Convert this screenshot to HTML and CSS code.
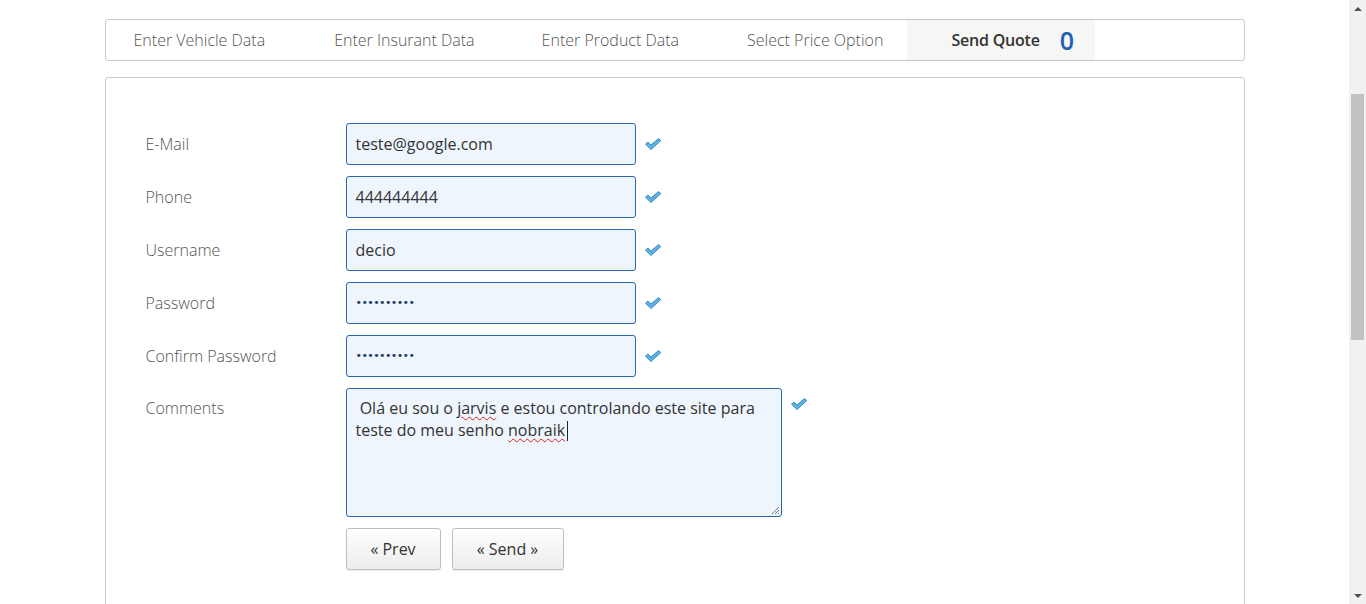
FILE: index.html
```html
<!DOCTYPE html>
<html>
<head>
<meta charset="utf-8">
<link rel="stylesheet" href="styles.css">
</head>
<body>
<div class="page">
  <div class="container">
    <nav class="steps">
      <span class="tab tab-1">Enter Vehicle Data</span>
      <span class="tab tab-2">Enter Insurant Data</span>
      <span class="tab tab-3">Enter Product Data</span>
      <span class="tab tab-4">Select Price Option</span>
      <span class="tab active">Send Quote <span class="counter">0</span></span>
    </nav>
    <section class="panel">
      <div class="row">
        <label class="label">E-Mail</label>
        <div class="field">teste@google.com</div>
        <svg class="check" viewBox="0 0 18 14" width="18" height="14"><path d="M1.5 7.2 L4 5 L7 8 L14.5 1.5 L16.8 3.6 L7 12.5 Z" fill="#5db0e2" stroke="#3a8fc8" stroke-width="1" stroke-linejoin="round"/></svg>
      </div>
      <div class="row">
        <label class="label">Phone</label>
        <div class="field">444444444</div>
        <svg class="check" viewBox="0 0 18 14" width="18" height="14"><path d="M1.5 7.2 L4 5 L7 8 L14.5 1.5 L16.8 3.6 L7 12.5 Z" fill="#5db0e2" stroke="#3a8fc8" stroke-width="1" stroke-linejoin="round"/></svg>
      </div>
      <div class="row">
        <label class="label">Username</label>
        <div class="field">decio</div>
        <svg class="check" viewBox="0 0 18 14" width="18" height="14"><path d="M1.5 7.2 L4 5 L7 8 L14.5 1.5 L16.8 3.6 L7 12.5 Z" fill="#5db0e2" stroke="#3a8fc8" stroke-width="1" stroke-linejoin="round"/></svg>
      </div>
      <div class="row">
        <label class="label">Password</label>
        <div class="field dots">••••••••••</div>
        <svg class="check" viewBox="0 0 18 14" width="18" height="14"><path d="M1.5 7.2 L4 5 L7 8 L14.5 1.5 L16.8 3.6 L7 12.5 Z" fill="#5db0e2" stroke="#3a8fc8" stroke-width="1" stroke-linejoin="round"/></svg>
      </div>
      <div class="row">
        <label class="label">Confirm Password</label>
        <div class="field dots">••••••••••</div>
        <svg class="check" viewBox="0 0 18 14" width="18" height="14"><path d="M1.5 7.2 L4 5 L7 8 L14.5 1.5 L16.8 3.6 L7 12.5 Z" fill="#5db0e2" stroke="#3a8fc8" stroke-width="1" stroke-linejoin="round"/></svg>
      </div>
      <div class="row row-top">
        <label class="label">Comments</label>
        <div class="area">&nbsp;Olá eu sou o <span class="typo">jarvis</span> e estou controlando este site para teste do meu senho <span class="typo">nobraik</span><span class="caret"></span>
          <svg class="grip" viewBox="0 0 10 10" width="10" height="10"><path d="M9 2 L2 9 M9 5 L5 9 M9 8 L8 9" stroke="#777" stroke-width="1"/></svg>
        </div>
        <svg class="check check-area" viewBox="0 0 18 14" width="18" height="14"><path d="M1.5 7.2 L4 5 L7 8 L14.5 1.5 L16.8 3.6 L7 12.5 Z" fill="#5db0e2" stroke="#3a8fc8" stroke-width="1" stroke-linejoin="round"/></svg>
      </div>
      <div class="buttons">
        <button class="btn btn-prev">« Prev</button>
        <button class="btn btn-send">« Send »</button>
      </div>
    </section>
  </div>
</div>
<div class="scrollbar">
  <div class="arrow arrow-up"></div>
  <div class="track"><div class="thumb"></div></div>
  <div class="arrow arrow-down"></div>
</div>
</body>
</html>
```

FILE: styles.css
```css
html, body {
  margin: 0;
  padding: 0;
  background: #fff;
  overflow: hidden;
  height: 100%;
}
body {
  font-family: "Open Sans", "Liberation Sans", sans-serif;
  font-size: 16px;
  color: #555;
}
.page {
  width: 1349px;
  padding-top: 19px;
}
.container {
  width: 1140px;
  margin: 0 auto;
}
.steps {
  display: flex;
  align-items: stretch;
  height: 40px;
  border: 1px solid #c9c9c9;
  border-radius: 3px;
  padding-left: 28px;
}
.tab {
  display: flex;
  align-items: center;
  color: #555;
  font-size: 16px;
  font-weight: 300;
  white-space: nowrap;
}
.tab-1 { margin-right: 69px; }
.tab-2 { margin-right: 67px; }
.tab-3 { margin-right: 68px; }
.tab-4 { margin-right: 24px; }
.tab.active {
  background: #f6f6f4;
  padding: 0 21px 0 44px;
  font-weight: 600;
  color: #333;
  letter-spacing: -0.2px;
}
.counter {
  font-size: 25px;
  font-weight: 600;
  color: #1f5fb5;
  margin-left: 20px;
  letter-spacing: 0;
}
.panel {
  margin-top: 16px;
  border: 1px solid #c9c9c9;
  border-radius: 3px;
  padding: 45px 0 0 40px;
  min-height: 600px;
}
.row {
  display: flex;
  align-items: center;
  margin-bottom: 11px;
}
.row-top {
  align-items: flex-start;
}
.label {
  width: 200px;
  color: #555;
  font-weight: 300;
  line-height: 40px;
}
.field {
  box-sizing: border-box;
  width: 290px;
  height: 42px;
  border: 1px solid #2a68b0;
  border-radius: 3px;
  background: #eef5fd;
  padding: 0 9px;
  line-height: 40px;
  color: #333;
  font-size: 16px;
}
.dots {
  font-family: "DejaVu Sans", sans-serif;
  font-size: 11px;
  letter-spacing: -0.6px;
  color: #1f3f6e;
}
.check {
  margin-left: 8px;
}
.area {
  position: relative;
  box-sizing: border-box;
  width: 436px;
  height: 129px;
  border: 1px solid #2a68b0;
  border-radius: 3px;
  background: #eef5fd;
  padding: 8px 9px;
  line-height: 22px;
  color: #333;
}
.typo {
  text-decoration: underline wavy #e02020;
  text-decoration-thickness: 1px;
  text-underline-offset: 2px;
}
.caret {
  display: inline-block;
  width: 1px;
  height: 20px;
  background: #222;
  vertical-align: -5px;
  margin-left: 2px;
}
.grip {
  position: absolute;
  right: 1px;
  bottom: 1px;
}
.check-area {
  margin-left: 8px;
  margin-top: 9px;
}
.buttons {
  display: flex;
  gap: 11px;
  margin-left: 200px;
}
.btn {
  box-sizing: border-box;
  height: 42px;
  border: 1px solid #bdbdbd;
  border-radius: 3px;
  background: linear-gradient(#ffffff, #ececec);
  font-family: "Open Sans", "Liberation Sans", sans-serif;
  font-size: 16px;
  color: #333;
  padding: 0;
  box-shadow: 0 1px 1px rgba(0,0,0,0.08);
}
.btn-prev { width: 95px; }
.btn-send { width: 112px; }
.scrollbar {
  position: fixed;
  top: 0;
  right: 0;
  width: 17px;
  height: 100%;
  background: #f1f1f1;
  display: flex;
  flex-direction: column;
}
.arrow {
  height: 17px;
  display: flex;
  align-items: center;
  justify-content: center;
}
.arrow-up::before {
  content: "";
  border-left: 4px solid transparent;
  border-right: 4px solid transparent;
  border-bottom: 4px solid #505050;
}
.arrow-down::before {
  content: "";
  border-left: 4px solid transparent;
  border-right: 4px solid transparent;
  border-top: 4px solid #505050;
}
.track {
  flex: 1;
  position: relative;
}
.thumb {
  position: absolute;
  top: 77px;
  left: 2px;
  width: 13px;
  height: 246px;
  background: #c1c1c1;
}
```
